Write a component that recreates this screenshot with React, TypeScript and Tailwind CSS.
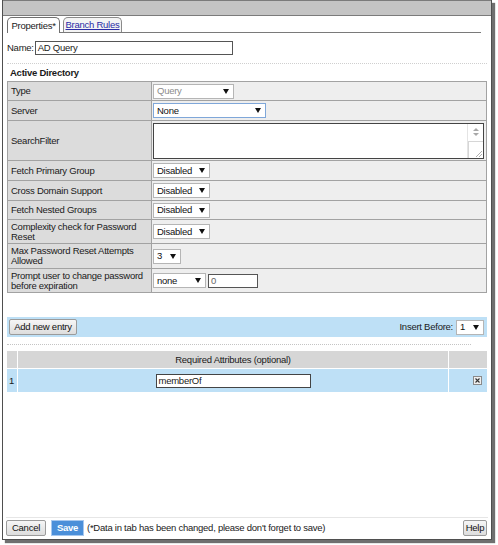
import React from 'react';

const Arrow = () => (
  <svg width="6" height="5" viewBox="0 0 6 5" className="shrink-0">
    <path d="M0 0h6L3 5z" fill="#111" />
  </svg>
);

function Select({ value, className = '', muted = false, focus = false }: { value: string; className?: string; muted?: boolean; focus?: boolean }) {
  return (
    <div
      className={`flex h-[15px] items-center justify-between bg-white pl-[3px] pr-[4px] border ${
        focus ? 'border-[#7fa7d9]' : 'border-[#b5b5b5]'
      } ${className}`}
    >
      <span className={muted ? 'text-[#8c8c8c]' : 'text-[#111]'}>{value}</span>
      <Arrow />
    </div>
  );
}

function Btn({ children, className = '' }: { children: React.ReactNode; className?: string }) {
  return (
    <div
      className={`flex h-[16px] items-center justify-center rounded-[2px] border border-[#9b9b9b] bg-gradient-to-b from-[#f6f6f6] to-[#dddddd] text-[#111] ${className}`}
    >
      {children}
    </div>
  );
}

type Row = { label: React.ReactNode; h: string; value: React.ReactNode };

const rows: Row[] = [
  { label: 'Type', h: 'h-[19px]', value: <Select value="Query" muted className="w-[81px]" /> },
  { label: 'Server', h: 'h-[20px]', value: <Select value="None" focus className="w-[113px]" /> },
  {
    label: 'SearchFilter',
    h: 'h-[40px]',
    value: (
      <div className="flex h-[36px] w-[331px] border border-[#444] bg-white">
        <div className="flex-1" />
        <div className="flex w-[16px] flex-col border-l border-[#e4e4e4]">
          <div className="flex h-[17px] flex-col items-center justify-center gap-[2px]">
            <svg width="6" height="3" viewBox="0 0 6 3"><path d="M0 3h6L3 0z" fill="#a8a8a8" /></svg>
            <svg width="6" height="3" viewBox="0 0 6 3"><path d="M0 0h6L3 3z" fill="#a8a8a8" /></svg>
          </div>
          <div className="relative flex-1 border-t border-l border-[#d6d6d6]">
            <svg width="7" height="7" viewBox="0 0 7 7" className="absolute bottom-[1px] right-[1px]">
              <path d="M7 1L1 7M7 4L4 7" stroke="#9a9a9a" strokeWidth="0.8" />
            </svg>
          </div>
        </div>
      </div>
    ),
  },
  { label: 'Fetch Primary Group', h: 'h-[20px]', value: <Select value="Disabled" className="w-[57px]" /> },
  { label: 'Cross Domain Support', h: 'h-[20px]', value: <Select value="Disabled" className="w-[57px]" /> },
  { label: 'Fetch Nested Groups', h: 'h-[19px]', value: <Select value="Disabled" className="w-[57px]" /> },
  {
    label: (
      <>
        Complexity check for Password
        <br />
        Reset
      </>
    ),
    h: 'h-[24px]',
    value: <Select value="Disabled" className="w-[57px]" />,
  },
  {
    label: (
      <>
        Max Password Reset Attempts
        <br />
        Allowed
      </>
    ),
    h: 'h-[25px]',
    value: <Select value="3" className="w-[28px]" />,
  },
  {
    label: (
      <>
        Prompt user to change password
        <br />
        before expiration
      </>
    ),
    h: 'h-[24px]',
    value: (
      <div className="flex items-center gap-[2px]">
        <Select value="none" className="w-[53px]" />
        <div className="flex h-[14px] w-[50px] items-center border border-[#555] bg-white pl-[2px] text-[#666]">0</div>
      </div>
    ),
  },
];

export default function App() {
  return (
    <div className="h-[545px] w-[498px] whitespace-nowrap bg-white text-[9.5px] leading-[10px] tracking-[-0.25px] text-[#1a1a1a] font-['Liberation_Sans',Arial,sans-serif]">
      <div className="ml-[2px] flex h-[540px] w-[490px] flex-col border-x border-b border-[#4f4f4f] shadow-[3px_3px_1px_#6f6f6f]">
        {/* barre du haut */}
        <div className="h-[16px] shrink-0 border-t border-b border-[#7b7b7b] bg-[#c4c4c4]" />

        {/* onglets */}
        <div className="ml-[4px] mr-[10px] mt-[1px] flex h-[16px] items-end gap-[3px] border-b border-[#7a7a7a]">
          <div className="-mb-px flex h-[16px] w-[53px] items-center justify-center rounded-t-[5px] border border-b-0 border-[#6f6f6f] bg-white">
            Properties*
          </div>
          <div className="flex h-[15px] w-[59px] items-center justify-center rounded-t-[5px] border border-b-0 border-[#8a8a8a] bg-[#f4f4f4] text-[#2b2ba6] underline">
            Branch Rules
          </div>
        </div>

        {/* nom */}
        <div className="ml-[4px] mt-[8px] flex items-center gap-px">
          <span>Name:</span>
          <div className="flex h-[14px] w-[198px] items-center border border-[#555] bg-white pl-[2px]">AD Query</div>
        </div>

        <div className="mx-[4px] mt-[8px] border-t border-dotted border-[#cfcfcf]" />

        <div className="ml-[7px] mt-[4px] font-bold">Active Directory</div>

        {/* tableau des propriétés */}
        <div className="mx-[4px] mt-[3px] border-t border-l border-[#a2a2a2]">
          {rows.map((r, i) => (
            <div key={i} className={`grid grid-cols-[144px_1fr] ${r.h}`}>
              <div className="flex items-center border-r border-b border-[#a2a2a2] bg-[#dcdcdc] pl-[3px]">
                <span>{r.label}</span>
              </div>
              <div className="flex items-center border-r border-b border-[#a2a2a2] bg-[#eeeeee] pl-[1px]">{r.value}</div>
            </div>
          ))}
        </div>

        {/* barre d'ajout */}
        <div className="mx-[4px] mt-[24px] flex h-[20px] items-center justify-between bg-[#bee0f6] pl-[2px] pr-[3px]">
          <Btn className="w-[68px]">Add new entry</Btn>
          <div className="flex items-center gap-[3px]">
            <span>Insert Before:</span>
            <Select value="1" className="w-[28px]" />
          </div>
        </div>

        <div className="ml-[4px] mr-[20px] mt-[7px] border-t border-dotted border-[#c4c4c4]" />

        {/* attributs requis */}
        <div className="mx-[4px] mt-[6px]">
          <div className="grid h-[17px] grid-cols-[10px_1fr_38px] gap-x-px bg-white">
            <div className="bg-[#d6d6d6]" />
            <div className="flex items-center justify-center bg-[#d6d6d6]">Required Attributes (optional)</div>
            <div className="bg-[#d6d6d6]" />
          </div>
          <div className="mt-px grid h-[23px] grid-cols-[10px_1fr_38px] gap-x-px bg-white">
            <div className="flex items-center bg-[#bee0f6] pl-[2px]">1</div>
            <div className="flex items-center justify-center bg-[#bee0f6]">
              <div className="flex h-[14px] w-[155px] items-center border border-[#444] bg-white pl-[2px]">memberOf</div>
            </div>
            <div className="flex items-center justify-end bg-[#bee0f6] pr-[5px]">
              <div className="flex h-[9px] w-[9px] items-center justify-center border border-[#8a8a8a] bg-[#efefef]">
                <svg width="5" height="5" viewBox="0 0 5 5"><path d="M0.5 0.5L4.5 4.5M4.5 0.5L0.5 4.5" stroke="#333" strokeWidth="1.1" /></svg>
              </div>
            </div>
          </div>
        </div>

        <div className="flex-1" />

        {/* pied */}
        <div className="mx-[3px] flex h-[22px] items-center justify-between border-t border-[#e6e6e6] pb-[1px]">
          <div className="flex items-center">
            <Btn className="w-[40px]">Cancel</Btn>
            <div className="ml-[5px] flex h-[16px] w-[33px] items-center justify-center border border-[#a8c8ee] bg-[#4b8fd9] font-bold text-white">
              Save
            </div>
            <span className="ml-[3px]">(*Data in tab has been changed, please don't forget to save)</span>
          </div>
          <Btn className="mr-[1px] w-[24px]">Help</Btn>
        </div>
      </div>
    </div>
  );
}
